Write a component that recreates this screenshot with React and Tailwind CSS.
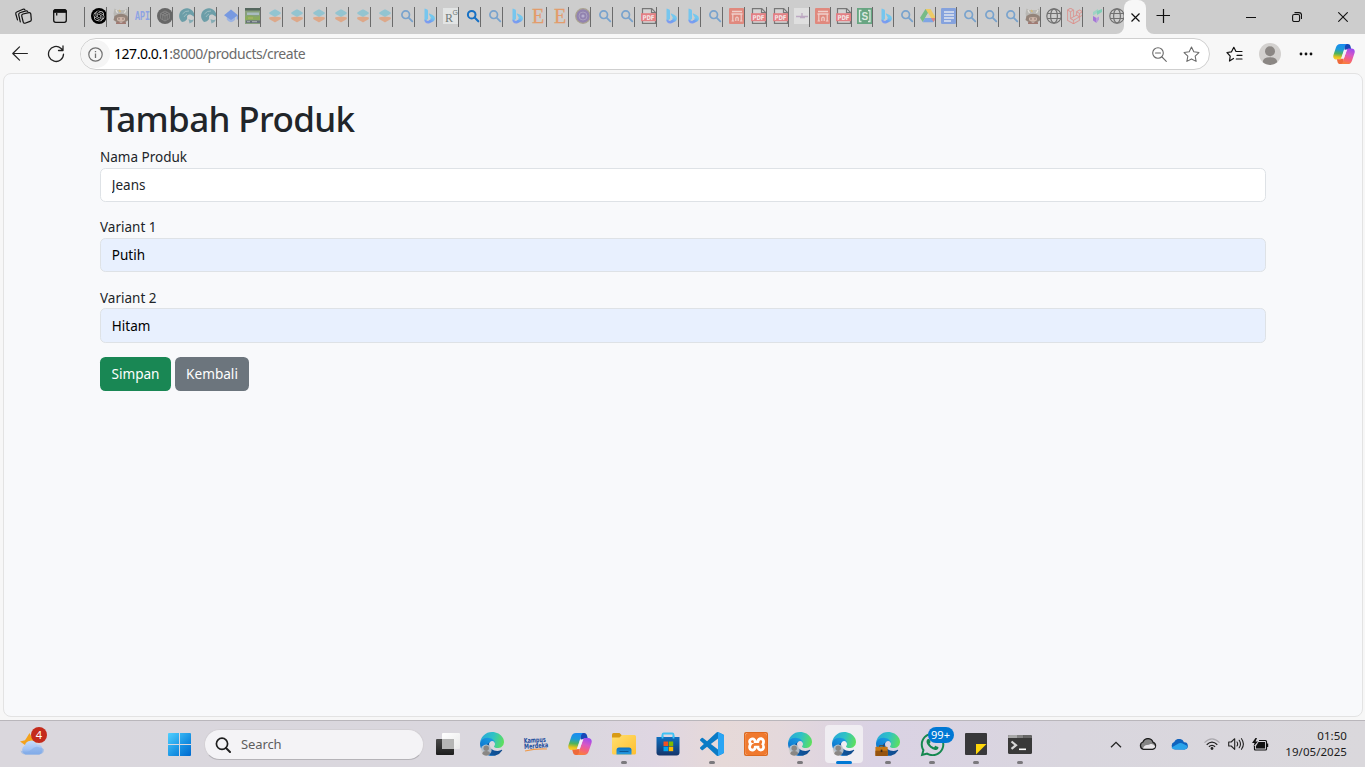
import React from "react";
import { SiOpenai, SiXampp } from "react-icons/si";
import { FaWhatsapp, FaLaravel } from "react-icons/fa";

/* ---------- shared gradients ---------- */
function Defs() {
  return (
    <svg width="0" height="0" className="absolute" aria-hidden="true">
      <defs>
        <linearGradient id="edgeDark" x1="0" x2="1" y1="0.5" y2="0.5">
          <stop offset="0" stopColor="#0c59a4" />
          <stop offset="1" stopColor="#114a8b" />
        </linearGradient>
        <linearGradient id="edgeBlue" x1="0.8" x2="0.2" y1="0.1" y2="1">
          <stop offset="0" stopColor="#1b9de2" />
          <stop offset="0.5" stopColor="#1284d6" />
          <stop offset="1" stopColor="#0a63c0" />
        </linearGradient>
        <linearGradient id="edgeGreen" x1="0" x2="1" y1="0.4" y2="0.6">
          <stop offset="0" stopColor="#2aa9d8" />
          <stop offset="0.5" stopColor="#2fc2c6" />
          <stop offset="1" stopColor="#5fe05a" />
        </linearGradient>
        <linearGradient id="copA" x1="0.4" x2="0.3" y1="0" y2="1">
          <stop offset="0" stopColor="#1a8cf0" />
          <stop offset="0.35" stopColor="#1c9bd8" />
          <stop offset="0.62" stopColor="#4fb45a" />
          <stop offset="0.85" stopColor="#e8c21c" />
          <stop offset="1" stopColor="#f7d13a" />
        </linearGradient>
        <linearGradient id="copB" x1="0.7" x2="0.4" y1="0" y2="1">
          <stop offset="0" stopColor="#9b4bf0" />
          <stop offset="0.4" stopColor="#d858c4" />
          <stop offset="0.7" stopColor="#f5607c" />
          <stop offset="1" stopColor="#f9803c" />
        </linearGradient>
        <linearGradient id="win" gradientUnits="userSpaceOnUse" x1="0" x2="23" y1="0" y2="23">
          <stop offset="0" stopColor="#4fd0ff" />
          <stop offset="0.6" stopColor="#1690e2" />
          <stop offset="1" stopColor="#0069cf" />
        </linearGradient>
        <linearGradient id="folder" x1="0" x2="1" y1="0" y2="1">
          <stop offset="0" stopColor="#ffdf70" />
          <stop offset="1" stopColor="#ffbf2e" />
        </linearGradient>
        <linearGradient id="folderBlue" x1="0" x2="0" y1="0" y2="1">
          <stop offset="0" stopColor="#0a70c0" />
          <stop offset="1" stopColor="#279be0" />
        </linearGradient>
        <linearGradient id="store" x1="0" x2="0" y1="0" y2="1">
          <stop offset="0" stopColor="#0f6fc0" />
          <stop offset="1" stopColor="#15356a" />
        </linearGradient>
        <linearGradient id="cloud" x1="0" x2="0" y1="0" y2="1">
          <stop offset="0" stopColor="#c6dcfa" />
          <stop offset="0.6" stopColor="#a3c3f3" />
          <stop offset="1" stopColor="#7ea9e8" />
        </linearGradient>
        <linearGradient id="bing" x1="0" x2="1" y1="1" y2="0">
          <stop offset="0" stopColor="#8b9bf0" />
          <stop offset="0.5" stopColor="#6f9df0" />
          <stop offset="1" stopColor="#74cfee" />
        </linearGradient>
        <linearGradient id="darkBox" x1="0" x2="0" y1="0" y2="1">
          <stop offset="0" stopColor="#4a4a4a" />
          <stop offset="1" stopColor="#1d1d1d" />
        </linearGradient>
        <linearGradient id="whiteBox" x1="0" x2="1" y1="0" y2="1">
          <stop offset="0" stopColor="#ffffff" />
          <stop offset="1" stopColor="#e9e9ea" />
        </linearGradient>
      </defs>
    </svg>
  );
}

/* ---------- favicons ---------- */
const Fav = ({ children }) => (
  <svg width="16" height="16" viewBox="0 0 16 16" fill="none" className="shrink-0 overflow-visible">
    {children}
  </svg>
);

const Chat = () => (
  <Fav>
    <circle cx="8" cy="8" r="8" fill="#000" />
    <g transform="translate(2.4 2.4)"><SiOpenai size={11.2} color="#d8d8d8" /></g>
  </Fav>
);
const GreyOrb = () => (
  <Fav>
    <circle cx="8" cy="8" r="8" fill="#666" />
    <path d="M8 3l4.400 2.500v5L8 13l-4.400-2.500v-5zM3.600 5.500L8 8l4.400-2.500M8 8v5M5.800 4.300l4.400 2.400v4.800M10.200 4.300L5.800 6.700v4.800" stroke="#8c8c8c" strokeWidth=".8" />
  </Fav>
);
const Hero = () => (
  <Fav>
    <path d="M1.500.5L4 2h8l2-1.500 1.500 5-1 5H1.500l-1-5z" fill="#b9b8b4" />
    <path d="M3 2l1.500 3M13 2l-1.500 3" stroke="#e0ded9" strokeWidth="1.200" />
    <path d="M6 2l1.500 2" stroke="#d4b978" strokeWidth="1.400" />
    <path d="M1.500 8q6.500-4.500 13 0l1 4-3 2h-9l-3-2z" fill="#94847a" />
    <path d="M4 9.800q4-1.500 8 0v2.400q-4 3-8 0z" fill="#cdb5a8" />
    <path d="M6 10.300v1.300M10 10.300v1.300" stroke="#6e5c58" />
    <path d="M3 14.300l2.500-.5 2.500 1 2.500-1 2.500.5V16H3z" fill="#a07a72" />
  </Fav>
);
const Api = () => (
  <Fav>
    <text x="0" y="12.300" fontSize="12" fontWeight="700" fontFamily="Liberation Mono" textLength="15" lengthAdjust="spacingAndGlyphs" fill="#8da3e3">API</text>
  </Fav>
);
const Postgre = () => (
  <Fav>
    <path d="M3 14A7.700 7.700 0 1 1 15.500 8.500c-1.500.4-2.500-1.500-4-1.900-2.300-.6-3.800 1-3.400 2.900.4 1.800-1.600 4.200-5.100 4.500z" fill="#6c9ea8" />
    <path d="M3.500 6q2.500-3.500 6.500-3M5 9q1-2 3-3" stroke="#a2bfc4" strokeWidth=".9" />
    <path d="M9.500 11q2.500 1.500 5.500.5-1 3-4.500 4z" fill="#85acb4" />
  </Fav>
);
const Scholar = () => (
  <Fav>
    <path d="M3.800 8.500h8.400v3.300Q8 16.500 3.800 11.800z" fill="#9db4e2" />
    <path d="M8 1.500l7 5.800L8 12 1 7.300z" fill="#7799e0" />
    <path d="M14.300 7.500v4" stroke="#7799e0" />
  </Fav>
);
const Photo = () => (
  <Fav>
    <rect width="16" height="16" fill="#87a07c" />
    <rect width="16" height="2.500" fill="#54675e" />
    <path d="M2 4.500h12v2.500H2z" fill="#a9bcc0" />
    <path d="M0 9q4-3 8-1t8-1v5H0z" fill="#8aab5c" />
    <path d="M1 12.500h14V15H1z" fill="#667078" />
    <path d="M2 13.700h3M7 13.700h5" stroke="#aeb4b8" />
    <path d="M3 10h5" stroke="#b4b768" />
  </Fav>
);
const Layers = () => (
  <Fav>
    <path d="M2.500 9.300L8 8.500l5.500.8q.8 1.200 0 2L8.700 14.100q-.7.400-1.400 0L2.500 11.300q-.8-.8 0-2z" fill="#dda889" />
    <path d="M7.300 1.600q.7-.4 1.400 0l4.700 2.700q.9.800 0 1.600L8.700 8.500q-.7.400-1.400 0L2.600 5.900q-.9-.8 0-1.600z" fill="#93c4d0" />
  </Fav>
);
const Search = ({ strong }) => (
  <Fav>
    <circle cx="6.700" cy="6.700" r="3.800" stroke={strong ? "#1670c4" : "#79a3cd"} strokeWidth={strong ? 2 : 1.700} />
    <path d="M9.600 9.600L13.300 13.300" stroke={strong ? "#1670c4" : "#79a3cd"} strokeWidth={strong ? 2.100 : 1.800} strokeLinecap="round" />
  </Fav>
);
const Bing = () => (
  <Fav>
    <path d="M3.500 1.200q0-.8.800-.5l2 .8q.7.400.7 1.200V11l-3.500 2.500z" fill="#76c6ee" />
    <path d="M7.800 6q-.3-.8.600-.4l3.200 1.500q2.400 1.100 2.400 3.400 0 1.500-1.500 2.800l-3.500-2.600 1-.8z" fill="#74c8ee" />
    <path d="M3.500 11.500L7 13l5-3.200q1.800 1.500.5 3.500L8.600 15.300q-5.100 1-5.100-3.800z" fill="url(#bing)" />
  </Fav>
);
const ResearchGate = () => (
  <Fav>
    <rect width="16" height="16" fill="#e2e4e4" />
    <text x="2" y="14" fontSize="12" fontFamily="Liberation Serif" fill="#6f7a78">R</text>
    <text x="9.500" y="7" fontSize="7" fontFamily="Liberation Sans" fill="#6f7a78">G</text>
  </Fav>
);
const Elsevier = () => (
  <Fav>
    <text x="1" y="15" fontSize="20" fontFamily="Liberation Serif" fill="#e39c6b" stroke="#e39c6b" strokeWidth=".3">E</text>
  </Fav>
);
const Seal = () => (
  <Fav>
    <circle cx="8" cy="8" r="7.300" fill="#9283b0" stroke="#aaa390" strokeWidth="1.300" />
    <circle cx="8" cy="8" r="4" stroke="#aaa0bf" />
    <circle cx="8" cy="8" r="1.600" fill="#b7afd0" />
  </Fav>
);
const Pdf = () => (
  <Fav>
    <path d="M1.500.600h9.200l3.800 3.800v11H1.500z" fill="#d4d4d4" stroke="#777" strokeWidth="1.200" />
    <path d="M10.500.800v3.800h4" stroke="#777" strokeWidth="1.200" />
    <rect x="0" y="5.200" width="15" height="8" fill="#e38084" />
    <text x="1.500" y="11.500" fontSize="6.600" fontWeight="700" fontFamily="DejaVu Sans" textLength="12" lengthAdjust="spacingAndGlyphs" fill="#f3e6e7">PDF</text>
  </Fav>
);
const Arch = () => (
  <Fav>
    <rect width="15" height="16" rx="1" fill="#e0897e" />
    <path d="M3 3.500h10M2.500 6h11" stroke="#efd0cb" strokeWidth="1.300" />
    <path d="M3.800 6v7M12.200 6v7M6.800 13V10q1.200-2 2.400 0v3" stroke="#efd0cb" strokeWidth="1.200" />
    <path d="M2.500 13h2.600M10.900 13h2.600" stroke="#efd0cb" strokeWidth="1" />
  </Fav>
);
const Pale = () => (
  <Fav>
    <rect width="15" height="16" fill="#dfdfdf" />
    <path d="M2 8.500h12M8 5v4M6 9.500h5" stroke="#bda9c2" strokeWidth="1.300" />
  </Fav>
);
const Sbox = () => (
  <Fav>
    <rect width="15" height="16" fill="#68a582" />
    <path d="M4.500 2.500h-2v11h2M11 2.500h2v11h-2" stroke="#dce8e0" strokeWidth="1.300" />
    <text x="4.600" y="12" fontSize="10" fontWeight="700" fontFamily="Liberation Sans" fill="#dce8e0">S</text>
  </Fav>
);
const Drive = () => (
  <Fav>
    <path d="M5.500 1h5L5 10.500 2.700 14 0 9.800z" fill="#77bb87" />
    <path d="M5.500 1h5L16 10h-5z" fill="#ecca67" />
    <path d="M5 10h11l-2.700 4.300H2.700z" fill="#7fa5e4" />
    <path d="M8 5l3 5H5z" fill="#cdcdcd" />
    <path d="M11 10h5l-2.500 4z" fill="#df8581" />
  </Fav>
);
const Docs = () => (
  <Fav>
    <rect width="15" height="16" rx="1.200" fill="#85a2dd" />
    <path d="M3 4h10M3 7h10M3 10h10M3 13h7" stroke="#e1e6f0" strokeWidth="1.400" />
  </Fav>
);
const Globe = () => (
  <Fav>
    <circle cx="8" cy="8" r="7.200" stroke="#707070" strokeWidth="1.200" />
    <ellipse cx="8" cy="8" rx="3.400" ry="7.200" stroke="#707070" strokeWidth="1.200" />
    <path d="M1.300 5.500h13.400M1.300 10.500h13.400" stroke="#707070" strokeWidth="1.200" />
  </Fav>
);
const Laravel = () => <FaLaravel size={16} color="#e08b86" stroke="#e08b86" strokeWidth={8} className="shrink-0" />;
const Filament = () => (
  <Fav>
    <path d="M5 4l5-3v3.500L5 7.500z" fill="#a0d2c4" />
    <path d="M9 3l5-2v3l-5 3z" fill="#82cfb8" />
    <path d="M5 8l3.500 2v5L5 12.500z" fill="#a576d8" />
    <path d="M8.500 10L11 8.500v3L8.500 15z" fill="#b896dd" />
  </Fav>
);

const WIDE_TABS = [
  Chat, Hero, Api, GreyOrb, Postgre, Postgre, Scholar, Photo, Layers, Layers, Layers, Layers, Layers, Layers,
  Search, Bing, ResearchGate, "strong", Search, Bing, Elsevier, Elsevier, Seal, Search, Search, Pdf, Bing, Bing,
  Search, Arch, Pdf, Pdf,
];
const NARROW_TABS = [
  Pale, Arch, Pdf, Sbox, Bing, Search, Drive, Docs, Search, Search, Search, Hero, Globe, Laravel, Filament, Globe,
];

function Tab({ kind, narrow }) {
  const Icon = kind === "strong" ? null : kind;
  return (
    <div className={`flex h-5 shrink-0 border-l border-[#6b6b6b] pt-px ${narrow ? "w-[21px] pl-[5px]" : "w-[22px] pl-[6px]"}`}>
      {Icon ? <Icon /> : <Search strong />}
    </div>
  );
}

function TabStrip() {
  return (
    <div className="flex h-[34px] items-start bg-[#cdcdcd]">
      <div className="flex h-[34px] w-[84px] shrink-0 items-center gap-[20px] pb-[2px] pl-[15px]">
        <svg width="17" height="17" viewBox="0 0 17 17" fill="none" stroke="#111" strokeWidth="1.200" strokeLinejoin="round" strokeLinecap="round" className="overflow-visible">
          <path d="M8 6l6-1.300q1.500-.2 1.800 1.200l.500 5.800q0 1.400-1.300 1.700l-5 1.800q-1.500.3-1.800-1.200L6.700 7.800Q6.600 6.400 8 6z" />
          <path d="M5.300 13.800L3.700 6.800q-.1-1.500 1.200-2l6-1.900q1.300-.2 1.800.6" />
          <path d="M2.500 11.800L.8 6q-.3-1.500.9-2L8 1.200q1.200-.4 1.800.3" />
        </svg>
        <svg width="16" height="16" viewBox="0 0 16 16" fill="none" stroke="#111">
          <rect x="1.700" y="1.700" width="12.600" height="12.600" rx="2" strokeWidth="1.300" />
          <path d="M1.500 4q0-2.500 2.500-2.500h8q2.500 0 2.500 2.500v.3h-13z" fill="#111" />
          <path d="M4.700 5v2.500" strokeWidth="1.300" />
        </svg>
      </div>
      <div className="flex pt-[7px]">
        {WIDE_TABS.map((k, i) => <Tab key={i} kind={k} />)}
        {NARROW_TABS.map((k, i) => <Tab key={i} kind={k} narrow />)}
      </div>
      <div className="relative h-[34px] w-[22px] shrink-0 rounded-t-lg bg-[#f7f7f7]">
        <svg width="8" height="8" viewBox="0 0 8 8" className="absolute bottom-0 -left-2"><path d="M8 0v8H0a8 8 0 0 0 8-8z" fill="#f7f7f7" /></svg>
        <svg width="8" height="8" viewBox="0 0 8 8" className="absolute bottom-0 -right-2"><path d="M0 0v8h8a8 8 0 0 1-8-8z" fill="#f7f7f7" /></svg>
        <div className="flex h-full items-center justify-center">
          <svg width="9" height="9" viewBox="0 0 9 9" stroke="#111" strokeWidth="1.200"><path d="M.5.500l8 8M8.500.500l-8 8" /></svg>
        </div>
      </div>
      <svg width="14" height="14" viewBox="0 0 14 14" stroke="#111" strokeWidth="1.200" className="ml-[10px] mt-[9px] shrink-0"><path d="M7.500 0v14M.5 6.500h14" /></svg>
      <div className="ml-auto flex h-[34px] shrink-0 items-center gap-[36px] pr-[17px]">
        <svg width="10" height="10" viewBox="0 0 10 10" stroke="#111"><path d="M0 5.500h10" /></svg>
        <svg width="10" height="10" viewBox="0 0 10 10" fill="none" stroke="#111" strokeWidth="1.100">
          <rect x=".6" y="2.500" width="7" height="7" rx="1.500" />
          <path d="M2.500.600h4.500q2.500 0 2.500 2.500v4" />
        </svg>
        <svg width="10" height="10" viewBox="0 0 10 10" stroke="#111" strokeWidth="1.100"><path d="M.3.300l9.400 9.400M9.700.300L.3 9.700" /></svg>
      </div>
    </div>
  );
}

function Copilot({ size }) {
  return (
    <svg width={size} height={size} viewBox="0 0 24 24" className="shrink-0">
      <path d="M12 1h4.200c1.600 0 2.400.9 2.800 2.400L19.800 6.500H17c-1.700 0-2.300.8-2.900 2L12.500 7z" fill="#1747b8" />
      <path d="M8 1h7.500c-1.500.3-2 1.300-2.400 2.600L9.300 15.900c-.5 1.500-1.300 2.100-2.900 2.100H4c-3 0-4.300-2-3.500-5L3.200 5C4 2.300 5.400 1 8 1z" fill="url(#copA)" />
      <path d="M12 23H7.800c-1.600 0-2.400-.9-2.800-2.400L4.200 17.700H7c1.700 0 2.300-.8 2.900-2l1.600 1.300z" fill="#ee6a3a" />
      <path d="M16 23H8.500c1.500-.3 2-1.300 2.400-2.600l3.800-12.300C15.200 6.600 16 6 17.600 6H20c3 0 4.300 2 3.500 5L20.800 19c-.8 2.700-2.200 4-4.800 4z" fill="url(#copB)" />
      <path d="M12.300 7.800q1.600-.9 3.100-.5l-3.600 9.200q-.8.900-2.900.6z" fill="#f4eef6" />
    </svg>
  );
}

const STAR = "M8 1l2.150 4.500 4.850.650-3.550 3.450.9 4.900L8 12.150 3.650 14.500l.9-4.900L1 6.150l4.850-.65z";

function Toolbar() {
  return (
    <div className="flex h-[39px] items-center bg-[#f7f7f7]">
      <div className="flex w-20 shrink-0 items-center gap-[19px] pl-3">
        <svg width="16" height="15" viewBox="0 0 16 15" fill="none" stroke="#222" strokeWidth="1.200" strokeLinecap="round" strokeLinejoin="round"><path d="M15.400 7.500H.800M7.500.800L.800 7.500l6.700 6.700" /></svg>
        <svg width="18" height="18" viewBox="0 0 18 18" fill="none" stroke="#222" strokeWidth="1.300" strokeLinecap="round" strokeLinejoin="round"><path d="M16.500 9.200A7.500 7.500 0 1 1 13.800 3.200L16 5.300M16 1v4.500h-4.500" /></svg>
      </div>
      <div className="mt-px flex h-8 w-[1130px] shrink-0 items-center rounded-full border border-[#cfcfcf] bg-white">
        <div className="flex h-7 w-[29px] items-center justify-center rounded-full bg-[#f5f5f5]">
          <svg width="15" height="15" viewBox="0 0 15 15" fill="none" stroke="#707070" strokeWidth="1.200"><circle cx="7.500" cy="7.500" r="6.700" /><path d="M7.500 6.500v4.500M7.500 4v1.300" strokeWidth="1.300" /></svg>
        </div>
        <div className="ml-[4px] pb-[2px] font-['Noto_Sans',sans-serif] text-[14px] tracking-[-0.45px] text-[#6b6b6b]"><span className="text-black">127.0.0.1</span>:8000/products/create</div>
        <div className="ml-auto flex items-center gap-4 pr-[9px]">
          <svg width="15" height="15" viewBox="0 0 15 15" fill="none" stroke="#6a6a6a" strokeWidth="1.100" strokeLinecap="round"><circle cx="6" cy="6" r="5.300" /><path d="M3.500 6h5M10 10l4.300 4.300" /></svg>
          <svg width="17" height="17" viewBox="0 0 16 16" fill="none" stroke="#6a6a6a" strokeLinejoin="round"><path d={STAR} /></svg>
        </div>
      </div>
      <div className="flex flex-1 items-center pl-4">
        <svg width="17" height="16" viewBox="0 0 17 16" fill="none" stroke="#111" strokeWidth="1.200" strokeLinejoin="round" strokeLinecap="round"><path d="M7.500 12.500L3.500 15l.7-4.800L1 6.500l4.500-.7L7.800 1.300l2.200 4.200h6M11 9.300h5M10.300 13h5.700" /></svg>
        <svg width="22" height="22" viewBox="0 0 22 22" className="ml-[16px]"><circle cx="11" cy="11" r="11" fill="#d3d1cf" /><circle cx="11" cy="8.300" r="5" fill="#8b8784" /><path d="M3.800 19.200q0-5 7.200-5t7.200 5a11 11 0 0 1-14.400 0z" fill="#8b8784" /></svg>
        <svg width="14" height="4" viewBox="0 0 14 4" fill="#111" className="ml-[18px]"><circle cx="2" cy="2" r="1.400" /><circle cx="7" cy="2" r="1.400" /><circle cx="12" cy="2" r="1.400" /></svg>
        <div className="ml-[20px]"><Copilot size={22} /></div>
      </div>
    </div>
  );
}

/* ---------- page form ---------- */
function Field({ label, value, filled }) {
  return (
    <div className="mb-[14.4px]">
      <label className="block h-[21.6px] pt-[0.8px] text-[13.5px] leading-[21.6px] text-[#212529]">{label}</label>
      <input
        readOnly
        value={value}
        className={`block h-[34.4px] w-full rounded-[5.4px] border border-[#dee2e6] px-[10.8px] text-[13.5px] outline-none ${filled ? "bg-[#e8f0fe] text-black" : "bg-white text-[#212529]"}`}
      />
    </div>
  );
}

function Page() {
  return (
    <div className="h-[647px] bg-[#f7f7f7] pl-[3px] pr-[2px]">
      <div className="h-[644px] rounded-lg border border-[#e3e3e3] bg-[#f8f9fb] pl-24 pr-[96px] pt-[21.6px] font-['Noto_Sans',sans-serif]">
        <h1 className="mb-[7.2px] h-[43.2px] pt-[1.6px] text-[35px] font-medium leading-[43.2px] tracking-[-0.65px] text-[#212529]">Tambah Produk</h1>
        <Field label="Nama Produk" value="Jeans" />
        <Field label="Variant 1" value="Putih" filled />
        <Field label="Variant 2" value="Hitam" filled />
        <div className="flex gap-1">
          <button className="h-[34px] w-[71px] rounded-[5.4px] bg-[#198754] text-[13.6px] text-white">Simpan</button>
          <button className="h-[34px] w-[74px] rounded-[5.4px] bg-[#6c757d] text-[13.6px] text-white">Kembali</button>
        </div>
      </div>
    </div>
  );
}

/* ---------- taskbar ---------- */
function Edge({ badge }) {
  return (
    <svg width="24" height="24" viewBox="0 0 256 256" overflow="visible">
      <path d="M231.07 190.54a93.73 93.73 0 01-10.54 4.71 101.87 101.87 0 01-35.9 6.46c-47.32 0-88.54-32.55-88.54-74.32A31.48 31.48 0 01112.52 100c-42.8 1.8-53.8 46.4-53.8 72.53 0 73.88 68.09 81.37 82.76 81.37 7.910 0 19.840-2.300 27-4.560l1.310-.440a128.340 128.340 0 0066.600-52.800 4 4 0 00-5.320-5.560z" fill="url(#edgeDark)" />
      <path d="M105.730 241.420a79.200 79.200 0 01-22.740-21.340 80.720 80.720 0 0129.530-120c3.120-1.470 8.450-4.050 15.540-4a32.350 32.350 0 0125.690 13 31.880 31.880 0 016.360 18.660c0-.210 24.460-79.600-80-79.600-43.900 0-80 41.660-80 78.210a130.150 130.150 0 0012.110 56 128 128 0 00156.380 67.110 75.550 75.550 0 01-62.780-8z" fill="url(#edgeBlue)" />
      <path d="M152.330 148.860c-.810 1.050-3.300 2.500-3.300 5.660 0 2.610 1.700 5.120 4.720 7.230 14.380 10 41.490 8.680 41.560 8.680a59.560 59.560 0 0030.270-8.350 61.380 61.380 0 0030.430-52.880c.260-22.410-8-37.310-11.340-43.910C223.460 23.840 177.720 0 128 0A128 128 0 000 126.200c.480-36.540 36.800-66.050 80-66.050 3.500 0 23.460.340 42 10.070 16.340 8.580 24.900 18.940 30.850 29.210 6.180 10.670 7.280 24.150 7.280 29.520s-2.740 13.330-7.800 19.910z" fill="url(#edgeGreen)" />
      {badge === "case" ? (
        <g>
          <path d="M38 160v-14h42v14" fill="none" stroke="#6b3d0c" strokeWidth="9" />
          <rect x="-6" y="158" width="130" height="98" rx="8" fill="#c47716" />
          <path d="M-6 200h130v56H-6z" fill="#96540f" />
          <rect x="50" y="188" width="18" height="26" fill="#3c2a1c" />
        </g>
      ) : (
        <g>
          <circle cx="66" cy="192" r="58" fill="#cfcdcb" fillOpacity=".85" />
          <circle cx="66" cy="174" r="29" fill="#8a8784" />
          <path d="M24 234q0-32 42-32t42 32q-42 36-84 0z" fill="#8a8784" />
        </g>
      )}
    </svg>
  );
}

const TaskView = () => (
  <svg width="24" height="24" viewBox="0 0 24 24">
    <rect x="6" y="1" width="18" height="16" rx="1" fill="url(#whiteBox)" />
    <rect x="0" y="7" width="18" height="16" rx="1" fill="url(#darkBox)" />
    <rect x="6" y="7" width="12" height="10" fill="#b5b5b5" />
  </svg>
);
const Kampus = () => (
  <svg width="26" height="16" viewBox="0 0 26 16" className="overflow-visible">
    <g transform="rotate(-4 13 8)" fontFamily="DejaVu Sans" fontWeight="700" fill="#1c4c9c">
      <text x="1" y="6.500" fontSize="7" textLength="22" lengthAdjust="spacingAndGlyphs">Kampus</text>
      <text x="1" y="12.200" fontSize="7" textLength="24" lengthAdjust="spacingAndGlyphs">Merdeka</text>
    </g>
    <path d="M2 15q10-2.500 22-2" stroke="#ef9a4b" strokeWidth="1.100" fill="none" />
  </svg>
);
const Explorer = () => (
  <svg width="24" height="22" viewBox="0 0 24 22">
    <path d="M0 1.500Q0 0 1.500 0h6l2.500 2.500V6H0z" fill="#d89a14" />
    <path d="M0 4.500h7.500L10 2h12.500Q24 2 24 3.500V20q0 1.500-1.500 1.500h-21Q0 21.500 0 20z" fill="url(#folder)" />
    <path d="M4.500 21.500V17q0-2.500 2.500-2.500h10q2.500 0 2.500 2.500v4.500z" fill="url(#folderBlue)" />
    <path d="M7.500 18.500h9" stroke="#0b5897" strokeWidth="1" />
  </svg>
);
const Store = () => (
  <svg width="24" height="24" viewBox="0 0 24 24" fill="none">
    <path d="M6.500 6V2.800Q6.500 1.500 7.800 1.500h8.400q1.300 0 1.300 1.300V6" stroke="#3fc2f4" strokeWidth="1.800" />
    <path d="M.5 5h23v15.500q0 3-3 3h-17q-3 0-3-3z" fill="url(#store)" />
    <path d="M6.500 3.500v3M17.500 3.500v3" stroke="#3fc2f4" strokeWidth="1.800" />
    <path d="M7.500 9.500H12V14H7.500z" fill="#f25022" /><path d="M12.700 9.500h4.500V14h-4.500z" fill="#7fba00" />
    <path d="M7.500 14.700H12v4.500H7.500z" fill="#00a4ef" /><path d="M12.700 14.700h4.500v4.500h-4.500z" fill="#ffb900" />
  </svg>
);
const Code = () => (
  <svg width="24" height="24" viewBox="0 0 24 24">
    <path d="M23.150 2.587L18.210.210a1.494 1.494 0 0 0-1.705.290l-9.460 8.630-4.120-3.128a.999.999 0 0 0-1.276.057L.327 7.261A1 1 0 0 0 .326 8.740L3.899 12 .326 15.260a1 1 0 0 0 .001 1.479L1.650 17.940a.999.999 0 0 0 1.276.057l4.120-3.128 9.460 8.630a1.492 1.492 0 0 0 1.704.290l4.942-2.377A1.500 1.500 0 0 0 24 20.060V3.939a1.500 1.500 0 0 0-.850-1.352zm-5.146 14.861L10.826 12l7.178-5.448v10.896z" fill="#0a7bc6" />
    <path d="M18 .1l5.150 2.487A1.500 1.500 0 0 1 24 3.940v16.120a1.500 1.500 0 0 1-.850 1.352L18 23.900z" fill="#2aa5f4" />
  </svg>
);
const Xampp = () => (
  <span className="flex h-6 w-6 items-center justify-center rounded-[2px] bg-[#dd6a20]">
    <span className="flex h-[22px] w-[22px] items-center justify-center overflow-hidden rounded-[3px] bg-white"><SiXampp size={23} color="#f0792e" className="shrink-0" /></span>
  </span>
);
const Whats = () => (
  <span className="relative flex">
    <FaWhatsapp size={27} color="#14884f" />
    <span className="absolute -top-[4px] left-[9px] flex h-4 w-[26px] items-center justify-center rounded-full bg-[#0078d4] font-['Noto_Sans',sans-serif] text-[11px] leading-4 text-white">99+</span>
  </span>
);
const Notes = () => (
  <svg width="22" height="22" viewBox="0 0 22 22">
    <path d="M1 0h20q1 0 1 1v20q0 1-1 1H1q-1 0-1-1V1q0-1 1-1z" fill="#38383a" />
    <path d="M11 11h10.500L11 21.500z" fill="#ffd60a" />
  </svg>
);
const Term = () => (
  <svg width="24" height="19" viewBox="0 0 24 19" fill="none">
    <rect width="24" height="19" rx="1.500" fill="#393939" />
    <path d="M0 1.500Q0 0 1.500 0H9v3H0z" fill="#a8a8a8" /><path d="M9 0h6.500v3H9z" fill="#828282" /><path d="M15.500 0h7Q24 0 24 1.500V3h-8.500z" fill="#666" />
    <path d="M3.500 6.500L8 10.200l-4.500 3.700" stroke="#d6d6d6" strokeWidth="2.200" />
    <path d="M11 14.300h7" stroke="#fff" strokeWidth="1.600" />
  </svg>
);

const APPS = [
  { icon: <TaskView /> },
  { icon: <Edge /> },
  { icon: <Kampus /> },
  { icon: <Copilot size={24} /> },
  { icon: <Explorer />, open: true },
  { icon: <Store /> },
  { icon: <Code />, open: true },
  { icon: <Xampp /> },
  { icon: <Edge />, open: true },
  { icon: <Edge />, active: true },
  { icon: <Edge badge="case" />, open: true },
  { icon: <Whats />, open: true },
  { icon: <Notes />, open: true },
  { icon: <Term />, open: true },
];

function TaskButton({ icon, open, active }) {
  return (
    <div className="flex w-11 shrink-0 justify-center pt-1">
      <div className={`relative flex h-[38px] w-[38px] items-center justify-center rounded ${active ? "bg-[#f0edf2]" : ""}`}>
        {icon}
        {open && <span className="absolute -bottom-px left-4 h-[3px] w-[6px] rounded-full bg-[#7b797d]" />}
        {active && <span className="absolute -bottom-px left-[11px] h-[3px] w-4 rounded-full bg-[#0078d4]" />}
      </div>
    </div>
  );
}

function Taskbar() {
  return (
    <div className="flex h-[47px] items-start border-t border-[#b9b6bb] bg-[linear-gradient(90deg,#dad7dd_0%,#dad7de_42%,#dfd6e2_48%,#e6d9d8_53%,#e4d8db_57%,#dad2e4_64%,#d9d6de_78%,#dad8dc_100%)]">
      <div className="relative w-[168px] shrink-0 pl-5 pt-[11px]">
        <svg width="25" height="24" viewBox="0 0 25 24">
          <path d="M9.500 1l1.800 3.500L16 5l1 5-7 5-5-2L0 9.500l5-1.300L6.800 5.500z" fill="#f3a21c" />
          <path d="M5.500 22.500A4.800 4.800 0 0 1 4.700 13.700 6.500 6.500 0 0 1 17 12.500a5.200 5.200 0 0 1 2.300 10z" fill="url(#cloud)" />
          <path d="M5.500 22.500a5 5 0 0 1-5-4q7 3 11-1t8-2q3 0 4.500 2a5.200 5.200 0 0 1-4.700 5z" fill="#82ace8" fillOpacity=".55" />
        </svg>
        <span className="absolute left-[31px] top-[6px] flex h-4 w-4 items-center justify-center rounded-full bg-[#c42b1c] font-['Noto_Sans',sans-serif] text-[11px] leading-4 text-white">4</span>
      </div>
      <svg width="23" height="23" viewBox="0 0 23 23" fill="url(#win)" className="mt-[12px] shrink-0">
        <path d="M1 0h10v11H0V1q0-1 1-1zM12 0h10q1 0 1 1v10H12zM0 12h11v11H1q-1 0-1-1zM12 12h11v10q0 1-1 1H12z" />
      </svg>
      <div className="ml-[13px] mt-2 flex h-[31px] w-[220px] shrink-0 items-center rounded-full border border-[#d3d0d5] border-b-[#b5b3b8] bg-[#f4f3f6] pl-[10px]">
        <svg width="16" height="16" viewBox="0 0 16 16" fill="none" stroke="#1f1f1f" strokeWidth="1.700" strokeLinecap="round"><circle cx="7" cy="6.800" r="5.600" /><path d="M11 11l4 4" strokeWidth="2" /></svg>
        <span className="ml-[10px] font-['Noto_Sans',sans-serif] text-[13px] tracking-[-0.1px] text-[#5e5e5e]">Search</span>
      </div>
      <div className="ml-[2px] flex">
        {APPS.map((a, i) => <TaskButton key={i} {...a} />)}
      </div>
      <div className="ml-auto flex h-[46px] shrink-0 items-center pr-[18px]">
        <svg width="12" height="7" viewBox="0 0 12 7" fill="none" stroke="#222" strokeWidth="1.300"><path d="M1 6.300L6 1.300l5 5" /></svg>
        <svg width="18" height="12" viewBox="0 0 18 12" className="ml-[17px]"><path d="M4.500 11.300a3.800 3.800 0 0 1-.5-7.300A5.300 5.300 0 0 1 14 4.300a3.600 3.600 0 0 1-.5 7z" fill="#858585" stroke="#1e1e1e" strokeWidth="1.300" /><path d="M4 10.600q1-3.500 4-3.500 2 0 3.500-1 3.500-.600 4.700 2.400-.5 2-2.700 2.100z" fill="#e7e5e8" /></svg>
        <svg width="17" height="11" viewBox="0 0 17 11" className="ml-[14px]"><path d="M4 10.500A3.900 3.900 0 0 1 3.200 3 5.300 5.300 0 0 1 13 3.300a3.600 3.600 0 0 1 .5 7.200z" fill="#1063bd" /><path d="M2.500 10.300q-1.500-.5-2-1.800L8 4.300q1.700-.700 3 0l5 2.500q.8 3-2.500 3.900z" fill="#2aa3ea" /></svg>
        <svg width="16" height="12" viewBox="0 0 16 12" fill="none" strokeWidth="1.200" className="ml-[16px]"><path d="M.5 4.600q7.500-7.500 15 0" stroke="#aaa8ad" /><path d="M2.700 6.700q5.300-5 10.600 0M4.900 8.800q3.100-2.900 6.200 0" stroke="#222" /><circle cx="8" cy="10.500" r="1.400" fill="#222" /></svg>
        <svg width="17" height="14" viewBox="0 0 17 14" fill="none" stroke="#222" strokeWidth="1.100" strokeLinejoin="round" strokeLinecap="round" className="ml-[8px]"><path d="M.7 5v4h2.500l3.500 3.300V1.700L3.200 5zM9 5q1.300 2 0 4M11.200 3.300q2.600 3.700 0 7.400M13.500 1.700q3.800 5.300 0 10.600" /></svg>
        <svg width="17" height="13" viewBox="0 0 17 13" className="ml-[7px]"><path d="M7 2.500h6.500q1 0 1 1v7.500q0 1-1 1h-10q-1 0-1-1V8" fill="none" stroke="#111" strokeWidth="1.200" /><path d="M6.500 4H13v6.500H4V8z" fill="#111" /><path d="M15 5.500h1.200v3.500H15z" fill="#111" /><path d="M3.500 0L0 5h2.500l-1 3.500L6 3.500H3.500L5 0z" fill="#111" /></svg>
        <div className="ml-[15px] w-[63px] whitespace-nowrap text-right font-['Noto_Sans',sans-serif] text-[11.5px] leading-4 tracking-[0.05px] text-[#1b1b1b]">
          <div>01:50</div>
          <div>19/05/2025</div>
        </div>
      </div>
    </div>
  );
}

export default function App() {
  return (
    <div className="h-[767px] w-[1365px] overflow-hidden">
      <Defs />
      <TabStrip />
      <Toolbar />
      <Page />
      <Taskbar />
    </div>
  );
}
